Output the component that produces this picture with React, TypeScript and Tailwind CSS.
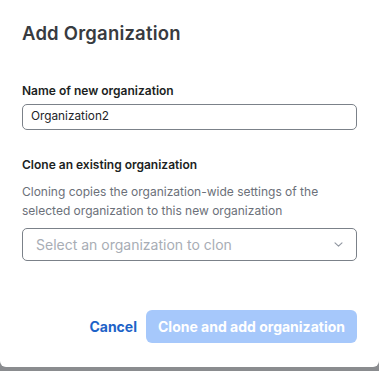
import React from "react";

export default function App() {
  return (
    <div className="w-[379px] h-[371px] bg-[#8a8c8f] overflow-hidden" style={{ fontFamily: "Inter, 'Noto Sans', sans-serif" }}>
      <div className="w-[379px] h-[367px] bg-white rounded-b-[6px] px-[22px] pt-[21px] flex flex-col">
        <h1 className="text-[18.5px] leading-[24px] font-semibold text-[#383b40] tracking-[0.2px]">Add Organization</h1>

        <label className="mt-[38px] text-[12px] leading-[16px] font-semibold text-[#1c1f23]">Name of new organization</label>
        <div className="mt-[5px] h-[26px] w-[335px] border-[1.5px] border-[#7b8189] rounded-[5px] flex items-center px-[8px] text-[11.8px] text-[#222428]">
          Organization2
        </div>

        <label className="mt-[27px] text-[12px] leading-[16px] font-semibold text-[#1c1f23]">Clone an existing organization</label>
        <p className="mt-[9px] text-[12px] leading-[19px] text-[#6b7079]">
          Cloning copies the organization-wide settings of the
          <br />
          selected organization to this new organization
        </p>
        <div className="mt-[8px] h-[33px] w-[335px] border-[1.5px] border-[#7b8189] rounded-[5px] flex items-center justify-between pl-[13px] pr-[13px]">
          <span className="text-[14px] text-[#a8adb5]">Select an organization to clon</span>
          <svg width="9" height="5" viewBox="0 0 9 5" fill="none">
            <path d="M1 0.8l3.5 3.4 3.5-3.4" stroke="#9096a0" strokeWidth="1.1" strokeLinecap="round" strokeLinejoin="round" />
          </svg>
        </div>

        <div className="mt-[49px] flex justify-end items-center gap-[9px]">
          <button className="text-[14px] font-bold text-[#1d63c8]">Cancel</button>
          <button className="h-[33px] w-[211px] rounded-[6px] bg-[#a6c8fb] text-white text-[14px] font-bold">
            Clone and add organization
          </button>
        </div>
      </div>
    </div>
  );
}
